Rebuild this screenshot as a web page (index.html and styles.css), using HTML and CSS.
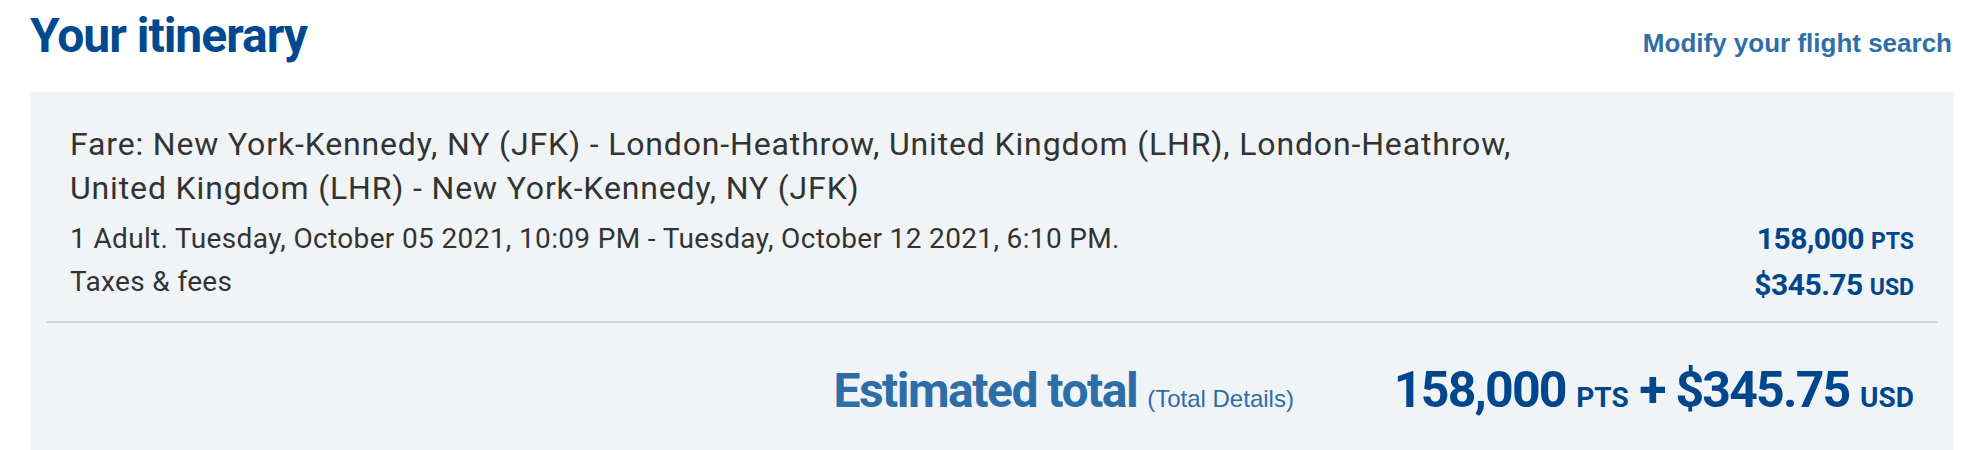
FILE: index.html
```html
<!DOCTYPE html>
<html lang="en">
<head>
    <meta charset="UTF-8">
    <meta name="viewport" content="width=device-width, initial-scale=1.0">
    <title>Your itinerary</title>
    <link rel="stylesheet" href="styles.css">
</head>
<body>
    <div class="page">
        <!-- Title row with the modify link on the right -->
        <div class="page-header">
            <h1 class="page-title">Your itinerary</h1>
            <a href="#" class="modify-link">Modify your flight search</a>
        </div>

        <div class="itinerary-box">
            <div class="fare-section">
                <p class="fare-route">Fare: New York-Kennedy, NY (JFK) - London-Heathrow, United Kingdom (LHR), London-Heathrow,<br>United Kingdom (LHR) - New York-Kennedy, NY (JFK)</p>
                <div class="fare-lines">
                    <div class="fare-details">
                        <div>1 Adult. Tuesday, October 05 2021, 10:09 PM - Tuesday, October 12 2021, 6:10 PM.</div>
                        <div>Taxes &amp; fees</div>
                    </div>
                    <div class="fare-prices">
                        <div>158,000 <span class="unit">PTS</span></div>
                        <div>$345.75 <span class="unit">USD</span></div>
                    </div>
                </div>
            </div>

            <div class="total-row">
                <span class="total-label">Estimated total</span>
                <a href="#" class="total-details">(Total Details)</a>
                <span class="total-amount">158,000 <span class="unit">PTS</span> + $345.75 <span class="unit">USD</span></span>
            </div>
        </div>
    </div>
</body>
</html>
```

FILE: styles.css
```css
body {
    margin: 0;
    background-color: #fff;
    font-family: Roboto, "Liberation Sans", Arial, sans-serif;
    color: #333;
}

.page {
    padding: 0 10px 0 30px;
}

/* Header row */
.page-header {
    display: flex;
    justify-content: space-between;
    align-items: baseline;
    padding-top: 12px;
    margin-bottom: 32px;
}

.page-title {
    margin: 0;
    font-size: 48px;
    line-height: 48px;
    font-weight: 700;
    letter-spacing: -1px;
    color: #004990;
}

.modify-link {
    font-family: "Liberation Sans", Arial, sans-serif;
    font-size: 26px;
    font-weight: 700;
    color: #2f6fa8;
    text-decoration: none;
    margin-right: 2px;
}

/* Grey itinerary panel */
.itinerary-box {
    background-color: #f0f4f7;
    padding: 0 16px 40px;
}

.fare-section {
    padding: 30px 24px 12px;
    border-bottom: 2px solid #c9d6df;
}

.fare-route {
    margin: 0;
    font-size: 32px;
    line-height: 44px;
    letter-spacing: 0.85px;
    color: #333;
}

.fare-lines {
    display: flex;
    justify-content: space-between;
    margin-top: 7px;
    font-size: 28px;
    line-height: 43px;
}

.fare-details {
    letter-spacing: 0.35px;
}

.fare-prices {
    text-align: right;
    font-size: 30px;
    font-weight: 700;
    color: #00468c;
    letter-spacing: -0.5px;
}

.fare-prices .unit {
    font-size: 23px;
    letter-spacing: 0;
}

/* Estimated total */
.total-row {
    padding: 37px 24px 0;
    text-align: right;
    line-height: 60px;
}

.total-label {
    font-size: 48px;
    font-weight: 700;
    letter-spacing: -1.5px;
    color: #2d6ea8;
}

.total-details {
    font-family: "Liberation Sans", Arial, sans-serif;
    font-size: 24px;
    color: #2d6ea8;
    text-decoration: none;
    margin-left: 6px;
    margin-right: 96px;
}

.total-amount {
    font-size: 50px;
    font-weight: 700;
    letter-spacing: -1.8px;
    color: #00468c;
}

.total-amount .unit {
    font-size: 28px;
    letter-spacing: 0;
}
```
